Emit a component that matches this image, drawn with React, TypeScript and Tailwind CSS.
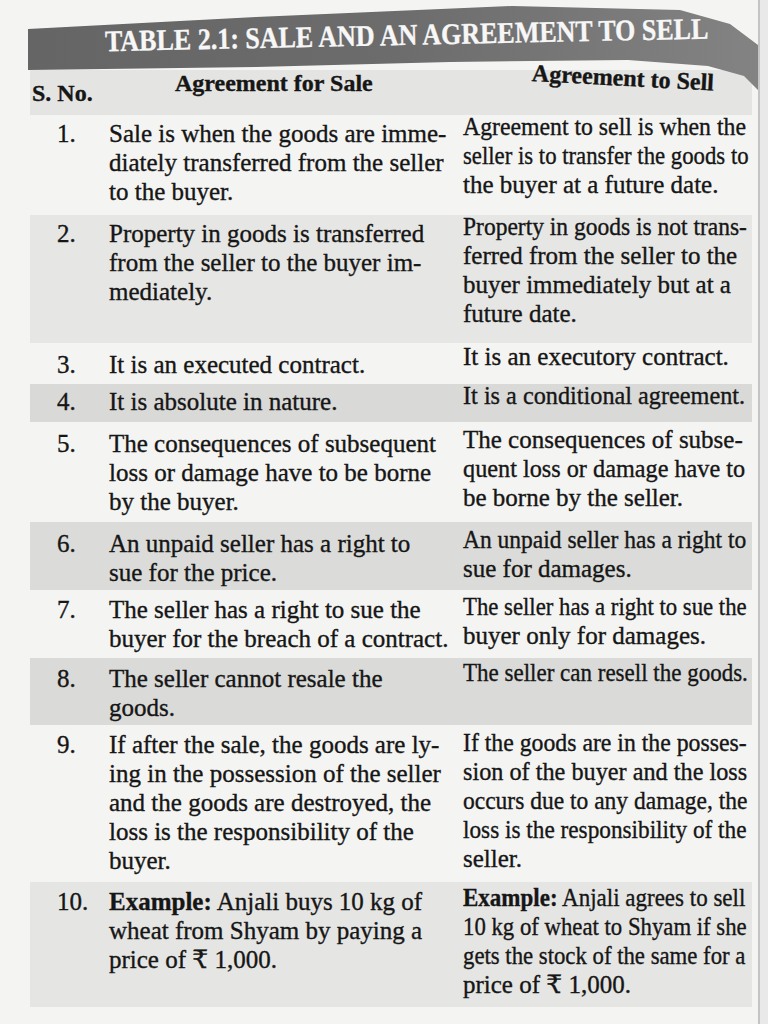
import React from "react";

type Line = { t: React.ReactNode; sq?: string };
type Row = {
  n: string;
  left: Line[];
  right: Line[];
  h: string;
  pt: string;
  bg: string;
  rt: string;
};

const rows: Row[] = [
  {
    n: "1.",
    h: "h-[100px]",
    pt: "pt-[4px]",
    bg: "",
    rt: "-mt-[7px]",
    left: [
      { t: "Sale is when the goods are imme-" },
      { t: "diately transferred from the seller" },
      { t: "to the buyer." },
    ],
    right: [
      { t: "Agreement to sell is when the", sq: "scale-x-[0.95]" },
      { t: "seller is to transfer the goods to", sq: "scale-x-[0.91]" },
      { t: "the buyer at a future date." },
    ],
  },
  {
    n: "2.",
    h: "h-[128px]",
    pt: "pt-[4px]",
    bg: "bg-[#e6e6e4]",
    rt: "-mt-[7px]",
    left: [
      { t: "Property in goods is transferred" },
      { t: "from the seller to the buyer im-" },
      { t: "mediately." },
    ],
    right: [
      { t: "Property in goods is not trans-", sq: "scale-x-[0.94]" },
      { t: "ferred from the seller to the" },
      { t: "buyer immediately but at a" },
      { t: "future date." },
    ],
  },
  {
    n: "3.",
    h: "h-[41px]",
    pt: "pt-[7px]",
    bg: "",
    rt: "-mt-[8px]",
    left: [{ t: "It is an executed contract." }],
    right: [{ t: "It is an executory contract." }],
  },
  {
    n: "4.",
    h: "h-[38px]",
    pt: "pt-[3px]",
    bg: "bg-[#d9d9d7]",
    rt: "-mt-[6px]",
    left: [{ t: "It is absolute in nature." }],
    right: [{ t: "It is a conditional agreement.", sq: "scale-x-[0.97]" }],
  },
  {
    n: "5.",
    h: "h-[100px]",
    pt: "pt-[7px]",
    bg: "",
    rt: "-mt-[4px]",
    left: [
      { t: "The consequences of subsequent" },
      { t: "loss or damage have to be borne" },
      { t: "by the buyer." },
    ],
    right: [
      { t: "The consequences of subse-" },
      { t: "quent loss or damage have to", sq: "scale-x-[0.97]" },
      { t: "be borne by the seller." },
    ],
  },
  {
    n: "6.",
    h: "h-[68px]",
    pt: "pt-[7px]",
    bg: "bg-[#dbdbd9]",
    rt: "-mt-[4px]",
    left: [{ t: "An unpaid seller has a right to" }, { t: "sue for the price." }],
    right: [
      { t: "An unpaid seller has a right to", sq: "scale-x-[0.94]" },
      { t: "sue for damages." },
    ],
  },
  {
    n: "7.",
    h: "h-[68px]",
    pt: "pt-[5px]",
    bg: "",
    rt: "-mt-[3px]",
    left: [
      { t: "The seller has a right to sue the" },
      { t: "buyer for the breach of a contract." },
    ],
    right: [
      { t: "The seller has a right to sue the", sq: "scale-x-[0.91]" },
      { t: "buyer only for damages." },
    ],
  },
  {
    n: "8.",
    h: "h-[67px]",
    pt: "pt-[6px]",
    bg: "bg-[#dadad8]",
    rt: "-mt-[6px]",
    left: [{ t: "The seller cannot resale the" }, { t: "goods." }],
    right: [{ t: "The seller can resell the goods.", sq: "scale-x-[0.92]" }],
  },
  {
    n: "9.",
    h: "h-[157px]",
    pt: "pt-[5px]",
    bg: "",
    rt: "-mt-[2px]",
    left: [
      { t: "If after the sale, the goods are ly-" },
      { t: "ing in the possession of the seller" },
      { t: "and the goods are destroyed, the" },
      { t: "loss is the responsibility of the" },
      { t: "buyer." },
    ],
    right: [
      { t: "If the goods are in the posses-", sq: "scale-x-[0.95]" },
      { t: "sion of the buyer and the loss", sq: "scale-x-[0.97]" },
      { t: "occurs due to any damage, the", sq: "scale-x-[0.94]" },
      { t: "loss is the responsibility of the", sq: "scale-x-[0.93]" },
      { t: "seller." },
    ],
  },
  {
    n: "10.",
    h: "h-[125px]",
    pt: "pt-[5px]",
    bg: "bg-[#e5e5e3]",
    rt: "-mt-[4px]",
    left: [
      {
        t: (
          <>
            <span className="font-bold">Example:</span> Anjali buys 10 kg of
          </>
        ),
      },
      { t: "wheat from Shyam by paying a" },
      { t: "price of ₹ 1,000." },
    ],
    right: [
      {
        t: (
          <>
            <span className="font-bold">Example:</span> Anjali agrees to sell
          </>
        ),
        sq: "scale-x-[0.92]",
      },
      { t: "10 kg of wheat to Shyam if she", sq: "scale-x-[0.91]" },
      { t: "gets the stock of the same for a", sq: "scale-x-[0.91]" },
      { t: "price of ₹ 1,000." },
    ],
  },
];

function Lines({ lines }: { lines: Line[] }) {
  return (
    <div className="flex flex-col">
      {lines.map((l, i) => (
        <div key={i} className="h-[29px] whitespace-nowrap">
          <span className={`inline-block origin-left ${l.sq ?? ""}`}>{l.t}</span>
        </div>
      ))}
    </div>
  );
}

export default function App() {
  return (
    <div className="w-[768px] h-[1024px] overflow-hidden bg-[#f4f4f2] text-[#161616] flex font-['Liberation_Serif','DejaVu_Serif',serif] text-[25px] leading-[29px] [-webkit-text-stroke:0.35px_#161616]">
      <div className="w-[758px] shrink-0 flex flex-col">
        {/* Title bar */}
        <div className="relative h-[70px] z-10 shrink-0">
          <div className="absolute left-[28px] top-[4px] w-[730px] h-[86px] bg-linear-to-r from-[#656565] via-[#6c6c6c] to-[#838383] [clip-path:polygon(0_25px,228px_13px,484px_2px,652px_6px,702px_20px,730px_41px,730px_86px,716px_72px,680px_62px,600px_56px,422px_58px,228px_63px,0_66px)]">
            <div className="absolute left-[77px] top-[24px] origin-left rotate-[-1.2deg] scale-y-[1.15] whitespace-nowrap text-[26px] leading-[28px] font-bold text-[#f7f7f7] [-webkit-text-stroke:0.3px_#f7f7f7]">
              TABLE 2.1: SALE AND AN AGREEMENT TO SELL
            </div>
          </div>
        </div>

        {/* Header row */}
        <div className="ml-[30px] w-[722px] h-[45px] shrink-0 flex bg-[#e4e4e2] font-bold text-[24px]">
          <div className="w-[79px] shrink-0 pl-[2px] mt-[9px] whitespace-nowrap">S. No.</div>
          <div className="w-[354px] shrink-0 pl-[66px] -mt-[1px] whitespace-nowrap">Agreement for Sale</div>
          <div className="flex-1 min-w-0 pl-[69px] -mt-[11px] whitespace-nowrap">
            <span className="inline-block origin-left rotate-[3deg]">Agreement to Sell</span>
          </div>
        </div>

        {/* Body rows */}
        {rows.map((r) => (
          <div key={r.n} className={`ml-[30px] w-[722px] shrink-0 flex ${r.h} ${r.pt} ${r.bg}`}>
            <div className="w-[79px] shrink-0 pl-[27px] whitespace-nowrap">{r.n}</div>
            <div className="w-[354px] shrink-0">
              <Lines lines={r.left} />
            </div>
            <div className={`flex-1 min-w-0 ${r.rt}`}>
              <Lines lines={r.right} />
            </div>
          </div>
        ))}
      </div>
      <div className="w-[2px] shrink-0 bg-[#c4c4c4]" />
      <div className="flex-1 bg-[#e9e9e9]" />
    </div>
  );
}
